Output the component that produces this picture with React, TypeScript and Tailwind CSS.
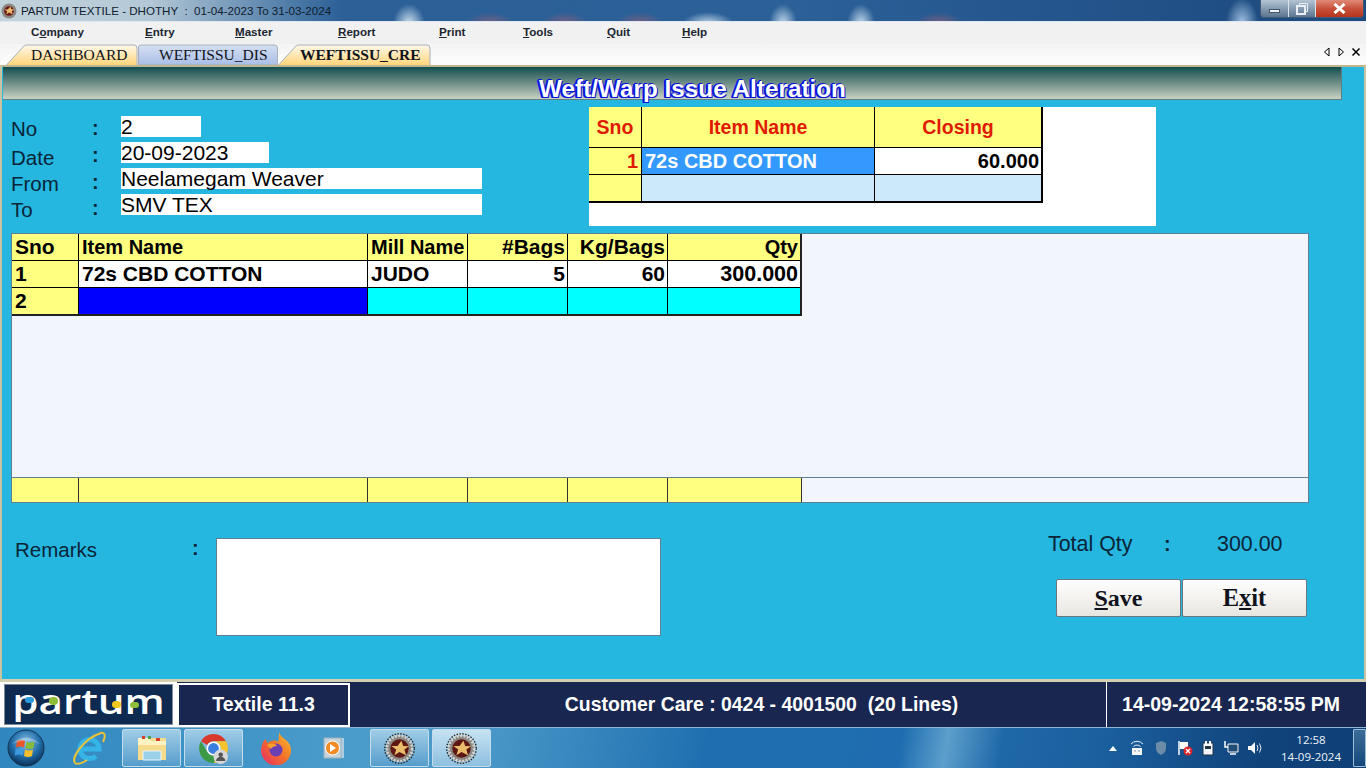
import React from 'react';

const menus: [string, string, string, number][] = [
  ['C', 'o', 'mpany', 114],
  ['', 'E', 'ntry', 90],
  ['', 'M', 'aster', 103],
  ['', 'R', 'eport', 101],
  ['', 'P', 'rint', 84],
  ['', 'T', 'ools', 84],
  ['', 'Q', 'uit', 75],
  ['', 'H', 'elp', 40],
];

const Tab = ({ label, w, active, blue }: { label: string; w: number; active?: boolean; blue?: boolean }) => (
  <div className="relative h-[21px] shrink-0" style={{ width: w }}>
    <svg className="absolute inset-0" width={w} height={21}>
      <defs>
        <linearGradient id={label} x1="0" y1="0" x2="0" y2="1">
          <stop offset="0" stopColor={blue ? '#d5e0f2' : '#fff8ea'} />
          <stop offset="1" stopColor={blue ? '#a9bde6' : '#ffd67c'} />
        </linearGradient>
      </defs>
      <path
        d={blue ? `M0.5 21V3Q0.5 1 3 1H${w - 4}Q${w - 0.5} 1 ${w - 0.5} 4V21Z` : `M0.5 21L18 2Q19 1 21 1H${w - 4}Q${w - 1} 1 ${w - 1} 4V21`}
        fill={`url(#${label})`}
        stroke="#a9b0bb"
      />
    </svg>
    <span
      className={`absolute top-0 h-[21px] leading-[21px] text-[15.5px] text-[#10131c] whitespace-nowrap [font-family:'Liberation_Serif',serif] ${active ? 'font-bold left-[22px] text-[15.4px]' : blue ? 'left-[21px]' : 'left-[25px]'}`}
    >
      {label}
    </span>
  </div>
);

const Field = ({ label, value, w, labelClass, colonClass }: { label: string; value: string; w: number; labelClass: string; colonClass: string }) => (
  <div className="flex h-[26px]">
    <span className={`w-[81px] text-[20.5px] leading-[26px] text-[#0a2438] ${labelClass}`}>{label}</span>
    <span className={`w-[29px] text-[20px] leading-[26px] font-bold text-[#0a2438] ${colonClass}`}>:</span>
    <span className="h-[21px] bg-white text-[21px] leading-[21px] text-black whitespace-nowrap" style={{ width: w }}>{value}</span>
  </div>
);

const cols = [67, 289, 100, 100, 100, 134];

const StartOrb = () => (
  <svg width="38" height="38" viewBox="0 0 38 38">
    <defs>
      <radialGradient id="orb" cx="50%" cy="35%" r="65%">
        <stop offset="0" stopColor="#8fc4e8" />
        <stop offset="0.6" stopColor="#1f6ca8" />
        <stop offset="1" stopColor="#0b2f55" />
      </radialGradient>
    </defs>
    <circle cx="19" cy="19" r="18" fill="url(#orb)" stroke="#16334f" />
    <path d="M10 12q4-2 8 0l-1 6.500q-4-2-8 0z" fill="#e8562a" />
    <path d="M19.500 12.500q4 2 8 0l-1 6.500q-4 2-8 0z" fill="#84bd3a" />
    <path d="M8.700 20q4-2 8 0l-1 6.500q-4-2-8 0z" fill="#3e9be0" />
    <path d="M18 20.500q4 2 8 0l-1 6.500q-4 2-8 0z" fill="#f5c02c" />
    <path d="M5 15Q19 2 33 15Q19 8 5 15z" fill="#fff" opacity="0.3" />
  </svg>
);

const PartumIcon = () => (
  <svg width="31" height="31" viewBox="0 0 32 32">
    <circle cx="16" cy="16" r="15.200" fill="none" stroke="#2a2a2a" strokeWidth="1.500" strokeDasharray="1.500 1.500" />
    <circle cx="16" cy="16" r="13.500" fill="#8b8782" />
    <circle cx="16" cy="16" r="13" fill="none" stroke="#d9d5d0" strokeWidth="2.500" strokeDasharray="2 1.500" />
    <circle cx="16" cy="16" r="9.500" fill="#5e1712" />
    <path d="M18 8l1.800 5.400 6 .2-4.800 3.500 1.800 5.900L16 19.600l-5.300 3.400 1.900-5.900-5-3.600 6.400 0z" fill="#e9bd6c" />
  </svg>
);

const TaskButton = ({ x, w, light, children }: { x: number; w: number; light?: boolean; children: React.ReactNode }) => (
  <div
    className={`h-[38px] flex items-center justify-center rounded-[2px] border border-[#c5dcec] ${light ? 'bg-gradient-to-b from-[#c6e2f2] to-[#8ec0e0]' : 'bg-gradient-to-b from-[#a0cde6] to-[#559dcc]'}`}
    style={{ width: w, marginLeft: x }}
  >
    {children}
  </div>
);

export default function App() {
  return (
    <div className="w-[1366px] h-[768px] overflow-hidden flex flex-col bg-[#f0f0f0] [font-family:'Liberation_Sans',Arial,sans-serif]">
      {/* Title bar */}
      <div className="relative h-[22px] shrink-0 flex items-center border-b border-[#dfe8f0] bg-[radial-gradient(ellipse_16px_20px_at_409px_24px,#d2e4f0,transparent),radial-gradient(ellipse_26px_12px_at_708px_24px,#c5dcec,transparent),radial-gradient(ellipse_14px_20px_at_783px_24px,#c5dcec,transparent),radial-gradient(ellipse_14px_20px_at_861px_24px,#c5dcec,transparent),radial-gradient(ellipse_16px_24px_at_1242px_22px,#9dbfe0,transparent),radial-gradient(ellipse_24px_12px_at_490px_24px,#7a5f80,transparent),radial-gradient(ellipse_24px_12px_at_565px_24px,#7a5f80,transparent),radial-gradient(ellipse_24px_12px_at_640px_24px,#7a5f80,transparent),radial-gradient(ellipse_24px_12px_at_939px_24px,#7a5f80,transparent),linear-gradient(90deg,#c3d3dc_0px,#b3c8d6_150px,#4f7ca8_290px,#2c6097_340px,#2b6098_800px,#204f85_1200px,#1f4a7d_1366px)]">
        <svg className="ml-[1px]" width="16" height="16" viewBox="0 0 16 16">
          <circle cx="8" cy="8" r="7.500" fill="#8b8782" />
          <circle cx="8" cy="8" r="4.800" fill="#6e1a14" />
          <path d="M9.500 3.500l.8 2.800 3 .2-2.500 1.800.8 2.900L8 9.600l-2.700 1.800.9-2.900-2.600-1.900 3.200-.1z" fill="#e9bd6c" />
        </svg>
        <span className="ml-[4px] text-[11.600px] text-[#10202e] whitespace-pre">PARTUM TEXTILE - DHOTHY  :  01-04-2023 To 31-03-2024</span>
        <div className="absolute right-[2px] top-0 h-[18px] w-[104px] flex rounded-b-[4px] border border-t-0 border-[#3d5a78] overflow-hidden">
          <div className="w-[28px] flex items-center justify-center bg-gradient-to-b from-[#b4c4d4] to-[#5c7690] border-r border-[#dbe4ec]">
            <div className="w-[11px] h-[4px] mt-[4px] bg-[#f0f4f8] border border-[#44586c]" />
          </div>
          <div className="w-[27px] flex items-center justify-center bg-gradient-to-b from-[#b4c4d4] to-[#5c7690] border-r border-[#dbe4ec]">
            <svg width="12" height="12" viewBox="0 0 12 12" fill="none" stroke="#e8eef4">
              <path d="M3.500 2.500V.5h8v8H9.500" />
              <rect x="1" y="3" width="8" height="8" strokeWidth="2" />
            </svg>
          </div>
          <div className="flex-1 flex items-center justify-center bg-gradient-to-b from-[#e08a78] via-[#c8503a] to-[#b8341c]">
            <svg width="13" height="11" viewBox="0 0 13 11"><path d="M1.500 1l10 9M11.500 1l-10 9" stroke="#fff" strokeWidth="3" /></svg>
          </div>
        </div>
      </div>

      {/* Menu */}
      <div className="relative h-[22px] shrink-0 flex pl-[31px] bg-[#f1f1f1]">
        {menus.map(([pre, ul, post, w]) => (
          <span
            key={ul}
            className="text-[11.600px] font-bold text-[#1c2530] leading-[20px] whitespace-nowrap"
            style={{ width: w }}
          >
            {pre}<u>{ul}</u>{post}
          </span>
        ))}
      </div>

      {/* Tabs */}
      <div className="relative h-[21px] shrink-0 flex pl-[6px] bg-gradient-to-b from-[#f4f4f4] to-[#fdfdfd]">
        <Tab label="DASHBOARD" w={132} />
        <Tab label="WEFTISSU_DIS" w={140} blue />
        <Tab label="WEFTISSU_CRE" w={153} active />
        <div className="absolute right-[5px] top-[3px] flex items-center gap-[6px] text-black">
          <svg width="8" height="10"><path d="M6 1v8L1.500 5z" fill="none" stroke="#000" /></svg>
          <svg width="8" height="10"><path d="M2 1v8L6.500 5z" fill="none" stroke="#000" /></svg>
          <svg width="10" height="10"><path d="M1.500 1.500l7 7M8.500 1.500l-7 7" stroke="#000" strokeWidth="1.500" /></svg>
        </div>
      </div>

      {/* Content frame */}
      <div className="h-[617px] shrink-0 border-t-2 border-x-2 border-b-[3px] border-t-[#bfb48c] border-x-[#c9c3a0] border-b-[#d3cfb0] bg-[#25b7e0] flex flex-col">
        <div className="ml-[1px] w-[1339px] h-[33px] shrink-0 flex items-center justify-center border-r border-b border-[#5e7f80] bg-gradient-to-b from-[#0d4f50] to-[#c9d2c3]">
          <span className="mt-[11px] ml-[41px] text-[24.300px] leading-[26px] font-bold text-white [text-shadow:-1px_1px_0_#0a14d8,-2px_1px_0_#0a14d8,-1px_-1px_0_#0a14d8,1px_1px_0_#0a14d8,-2px_0_0_#0a14d8]">
            Weft/Warp Issue Alteration
          </span>
        </div>

        {/* Top section */}
        <div className="flex h-[126px] shrink-0">
          <div className="w-[587px] pl-[9px] pt-[16px]">
            <Field label="No" value="2" w={80} labelClass="" colonClass="-mt-[1px]" />
            <Field label="Date" value="20-09-2023" w={148} labelClass="mt-[3px]" colonClass="" />
            <Field label="From" value="Neelamegam Weaver" w={361} labelClass="mt-[3px]" colonClass="mt-[1px]" />
            <Field label="To" value="SMV TEX" w={361} labelClass="mt-[3px]" colonClass="mt-[1px]" />
          </div>
          <div className="mt-[7px] w-[567px] h-[119px] bg-white">
            <div className="w-[454px] border-b-2 border-r-2 border-black">
              <div className="flex h-[41px] border-b border-black bg-[#ffff80] text-[19.500px] font-bold text-[#e01a00] leading-[40px] text-center">
                <div className="w-[53px] border-r border-black">Sno</div>
                <div className="w-[233px] border-r border-black">Item Name</div>
                <div className="flex-1">Closing</div>
              </div>
              <div className="flex h-[27px] border-b border-black text-[20px] font-bold leading-[26px]">
                <div className="w-[53px] border-r border-black bg-[#ffff80] text-[#e01a00] text-right pr-[3px]">1</div>
                <div className="w-[233px] border-r border-black bg-[#3399ff] text-white pl-[3px]">72s CBD COTTON</div>
                <div className="flex-1 bg-white text-black text-right pr-[2px]">60.000</div>
              </div>
              <div className="flex h-[26px]">
                <div className="w-[53px] border-r border-black bg-[#ffff80]" />
                <div className="w-[233px] border-r border-black bg-[#cce8fb]" />
                <div className="flex-1 bg-[#cce8fb]" />
              </div>
            </div>
          </div>
        </div>

        {/* Main grid */}
        <div className="mt-[7px] ml-[9px] w-[1298px] h-[270px] shrink-0 flex flex-col justify-between bg-[#f2f6fc] border border-[#5f7f95]">
          <div className="w-[790px] border-r-2 border-b-2 border-[#222] text-[20px] font-bold text-black">
            <div className="flex h-[27px] bg-[#ffff80] border-b border-black leading-[26px]">
              <div className="w-[67px] border-r border-black pl-[3px] text-[21px]">Sno</div>
              <div className="w-[289px] border-r border-black pl-[3px]">Item Name</div>
              <div className="w-[100px] border-r border-black pl-[3px] whitespace-nowrap">Mill Name</div>
              <div className="w-[100px] border-r border-black text-right pr-[2px] text-[21px]">#Bags</div>
              <div className="w-[100px] border-r border-black text-right pr-[2px] whitespace-nowrap text-[21px]">Kg/Bags</div>
              <div className="flex-1 text-right pr-[2px]">Qty</div>
            </div>
            <div className="flex h-[27px] bg-white border-b border-black leading-[26px] text-[21px]">
              <div className="w-[67px] border-r border-black bg-[#ffff80] pl-[3px]">1</div>
              <div className="w-[289px] border-r border-black pl-[3px]">72s CBD COTTON</div>
              <div className="w-[100px] border-r border-black pl-[3px]">JUDO</div>
              <div className="w-[100px] border-r border-black text-right pr-[2px]">5</div>
              <div className="w-[100px] border-r border-black text-right pr-[2px]">60</div>
              <div className="flex-1 text-right pr-[2px] text-[21.500px]">300.000</div>
            </div>
            <div className="flex h-[26px] bg-[#00ffff] leading-[26px] text-[21px]">
              <div className="w-[67px] border-r border-black bg-[#ffff80] pl-[3px]">2</div>
              <div className="w-[289px] border-r border-black bg-[#0000ff]" />
              <div className="w-[100px] border-r border-black" />
              <div className="w-[100px] border-r border-black" />
              <div className="w-[100px] border-r border-black" />
            </div>
          </div>
          <div className="flex h-[25px] border-t border-[#5f7f95]">
            {cols.map((w, i) => (
              <div key={i} className="bg-[#ffff80] border-r border-[#333]" style={{ width: w }} />
            ))}
          </div>
        </div>

        {/* Bottom section */}
        <div className="flex flex-1">
          <div className="w-[1040px] flex pl-[13px] pt-[35px]">
            <span className="w-[177px] text-[20.500px] leading-[24px] text-[#0a2438]">Remarks</span>
            <span className="w-[24px] text-[20px] leading-[20px] font-bold text-[#0a2438]">:</span>
            <div className="w-[445px] h-[98px] bg-white border border-[#5f7f95]" />
          </div>
          <div className="pt-[28px]">
            <div className="flex text-[21.400px] leading-[26px] text-[#0a2438] ml-[6px]">
              <span className="w-[116px]">Total Qty</span>
              <span className="w-[53px] font-bold text-[20px]">:</span>
              <span>300.00</span>
            </div>
            <div className="flex gap-[1px] mt-[22px] ml-[14px]">
              <button className="w-[125px] h-[38px] rounded-[2px] border border-[#6b7780] bg-gradient-to-b from-white to-[#e8e6e0] text-[24px] font-bold leading-none text-[#10131c] [font-family:'Liberation_Serif',serif]"><u>S</u>ave</button>
              <button className="w-[125px] h-[38px] rounded-[2px] border border-[#6b7780] bg-gradient-to-b from-white to-[#e8e6e0] text-[24.500px] font-bold leading-none text-[#10131c] [font-family:'Liberation_Serif',serif]">E<u>x</u>it</button>
            </div>
          </div>
        </div>
      </div>

      {/* Status bar */}
      <div className="h-[45px] shrink-0 flex bg-[#19264f] text-white font-bold text-[19.500px]">
        <div className="w-[177px] h-full pt-[2px] pl-[4px] bg-white">
          <div className="relative w-[169px] h-[41px] flex items-start justify-center bg-[#0f2a50] border border-[#7f8a99]">
            <span className="inline-block scale-x-[1.24] -mt-[2px] text-[34px] leading-[36px] font-semibold [font-family:'Open_Sans',sans-serif] text-white">partum</span>
            <span className="absolute left-[20px] top-[12px] w-[9px] h-[6px] rounded-full bg-[#2b9ad8]" />
            <span className="absolute left-[44px] top-[12px] w-[9px] h-[8px] rounded-full bg-[#8fbf3a]" />
            <span className="absolute left-[107px] top-[16px] w-[9px] h-[7px] rounded-full bg-[#f2c81e]" />
            <span className="absolute left-[125px] top-[17px] w-[9px] h-[6px] rounded-full bg-[#8fbf3a]" />
          </div>
        </div>
        <div className="mt-[1px] w-[173px] h-[44px] border-2 border-white flex items-center justify-center">Textile 11.3</div>
        <div className="w-[756px] pl-[67px] flex items-center justify-center whitespace-pre text-[19.400px]">Customer Care : 0424 - 4001500  (20 Lines)</div>
        <div className="flex-1 border-l border-white pr-[11px] flex items-center justify-center">14-09-2024 12:58:55 PM</div>
      </div>

      {/* Taskbar */}
      <div className="relative h-[41px] shrink-0 flex items-center border-t border-[#8fb4d0] bg-[linear-gradient(100deg,#2f87bf_0px,#4a9ccb_350px,#4a98c8_480px,#1f6fb0_700px,#1f6db0_890px,#5c9fcc_935px,#1f68a8_990px,#1b5f9e_1090px,#10437a_1250px,#0f4078_1366px)]">
        <div className="ml-[7px] flex items-center"><StartOrb /></div>
        <div className="ml-[26px]">
          <svg width="36" height="36" viewBox="0 0 36 36">
            <path d="M10 19h18a9.500 9.500 0 1 0-3 7" fill="none" stroke="#35b4e8" strokeWidth="5" />
            <path d="M4 33C0 28 12 9 30 3c4-1 5 3 2 9" fill="none" stroke="#e9c23a" strokeWidth="2" />
            <path d="M4 33c2 2 8 0 12-3" fill="none" stroke="#e9c23a" strokeWidth="2" />
          </svg>
        </div>
        <TaskButton x={15} w={59}>
          <svg width="32" height="30" viewBox="0 0 32 30">
            <path d="M2 5h28v22H2z" fill="#f5dc8c" />
            <path d="M2 5h11l2 3h15v4H2z" fill="#fff3c4" />
            <path d="M6 3h3v3H6z" fill="#d8402c" /><path d="M12 3h3v3h-3z" fill="#4ca34a" /><path d="M20 5h4v3h-4z" fill="#d8402c" />
            <path d="M7 18h18v9H7z" fill="#9ad0e8" stroke="#e9f4fa" />
          </svg>
        </TaskButton>
        <TaskButton x={3} w={59}>
          <svg width="33" height="33" viewBox="0 0 32 32">
            <path d="M16 2a14 14 0 0 1 12.120 7H16a7 7 0 0 0-6.060 3.500L3.880 9A14 14 0 0 1 16 2z" fill="#d93a2c" />
            <path d="M28.120 9A14 14 0 0 1 16 30l6.060-10.500A7 7 0 0 0 22.060 12.500 7 7 0 0 0 16 9z" fill="#f5c32c" />
            <path d="M3.880 9l6.060 10.500a7 7 0 0 0 12.120 0L16 30A14 14 0 0 1 3.880 9z" fill="#3c9a46" />
            <circle cx="16" cy="16" r="6" fill="#3a7fe0" stroke="#fff" strokeWidth="1.500" />
            <circle cx="23" cy="24" r="7" fill="#d8d8d8" />
            <circle cx="23" cy="22" r="2.200" fill="#555" />
            <path d="M18.500 28a4.500 4 0 0 1 9 0z" fill="#555" />
          </svg>
        </TaskButton>
        <div className="ml-[17px]">
          <svg width="32" height="34" viewBox="0 0 32 34">
            <defs>
              <linearGradient id="fox" x1="1" y1="0" x2="0" y2="1">
                <stop offset="0" stopColor="#f9c52c" />
                <stop offset="0.5" stopColor="#f3702a" />
                <stop offset="1" stopColor="#e8266a" />
              </linearGradient>
            </defs>
            <path d="M19 1c1 4 5 6 8 9 3 3 4 6 4 9a15 15 0 1 1-29-5c1-3 2-5 4-6 0 2 1 3 2 4 3-3 8-3 10-1 1-3 1-7 1-10z" fill="url(#fox)" />
            <circle cx="16" cy="19" r="6.500" fill="#6a3fb5" />
            <path d="M7 14c3-2 8-2 10 1-3 0-5 1-6 3z" fill="#f5a02c" />
          </svg>
        </div>
        <div className="ml-[28px] flex items-center justify-center w-[28px]">
          <svg width="26" height="26" viewBox="0 0 26 26">
            <rect x="6" y="3" width="17" height="20" fill="#d9e3ea" opacity="0.7" />
            <rect x="3" y="3" width="17" height="20" fill="#c7d3dc" stroke="#9db0bd" />
            <circle cx="11.500" cy="13" r="7" fill="#f08a24" stroke="#fff" />
            <path d="M9 9l6 4-6 4z" fill="#fff" />
          </svg>
        </div>
        <TaskButton x={22} w={59}><PartumIcon /></TaskButton>
        <TaskButton x={3} w={59} light><PartumIcon /></TaskButton>

        {/* Tray */}
        <div className="ml-auto flex items-center h-full text-white">
          <svg width="8" height="5" className="mr-[13px]"><path d="M0 5L4 0l4 5z" fill="#fff" /></svg>
          <svg width="14" height="16" viewBox="0 0 14 16" className="mr-[11px]">
            <path d="M1 4a8 8 0 0 1 12 0M3.500 6.500a5 5 0 0 1 7 0" fill="none" stroke="#e8eef4" />
            <rect x="2" y="8" width="10" height="7" fill="#f4f6f8" />
            <path d="M4.500 11h1M8.500 11h1" stroke="#1f3448" />
          </svg>
          <svg width="12" height="16" viewBox="0 0 12 16" className="mr-[10px]">
            <path d="M6 1l5 2v5c0 4-3 6-5 7-2-1-5-3-5-7V3z" fill="#6c8ca8" />
          </svg>
          <svg width="16" height="16" viewBox="0 0 16 16" className="mr-[8px]">
            <path d="M2 1v14" stroke="#fff" strokeWidth="1.500" /><path d="M3 2h8v7H3z" fill="#fff" />
            <circle cx="11" cy="11" r="4.500" fill="#d8282c" />
            <path d="M9 9l4 4M13 9l-4 4" stroke="#fff" strokeWidth="1.200" />
          </svg>
          <svg width="14" height="16" viewBox="0 0 14 16" className="mr-[9px]">
            <path d="M2 3h10v12H2z" fill="#f4f6f8" stroke="#1f3448" /><path d="M5 1v5M9 1v5" stroke="#fff" strokeWidth="2" /><path d="M4 6h6v3H4z" fill="#1f3448" />
          </svg>
          <svg width="15" height="16" viewBox="0 0 15 16" className="mr-[8px]">
            <path d="M4 4h10v8H4z" fill="#1f4d75" stroke="#f4f6f8" /><path d="M1 1v6h3" fill="none" stroke="#fff" strokeWidth="1.500" /><path d="M6 14h6" stroke="#fff" strokeWidth="1.500" />
          </svg>
          <svg width="15" height="14" viewBox="0 0 15 14" className="mr-[19px]">
            <path d="M1 5h3l4-4v12L4 9H1z" fill="#f4f6f8" /><path d="M10 4q2 3 0 6M12.500 2.500q3 4.500 0 9" fill="none" stroke="#dfe8f0" />
          </svg>
          <div className="w-[60px] pt-[1px] text-center text-[12px] leading-[20px] text-[#eef4fa] [font-family:'Open_Sans',sans-serif]">
            <div className="h-[17px] text-[11.500px]">12:58</div>
            <div className="text-[11.500px] whitespace-nowrap">14-09-2024</div>
          </div>
          <div className="ml-[12px] w-[13px] h-[38px] border border-[#9fbdd2] rounded-[1px] bg-gradient-to-b from-[#3c6d98] to-[#14487c]" />
        </div>
      </div>
    </div>
  );
}
